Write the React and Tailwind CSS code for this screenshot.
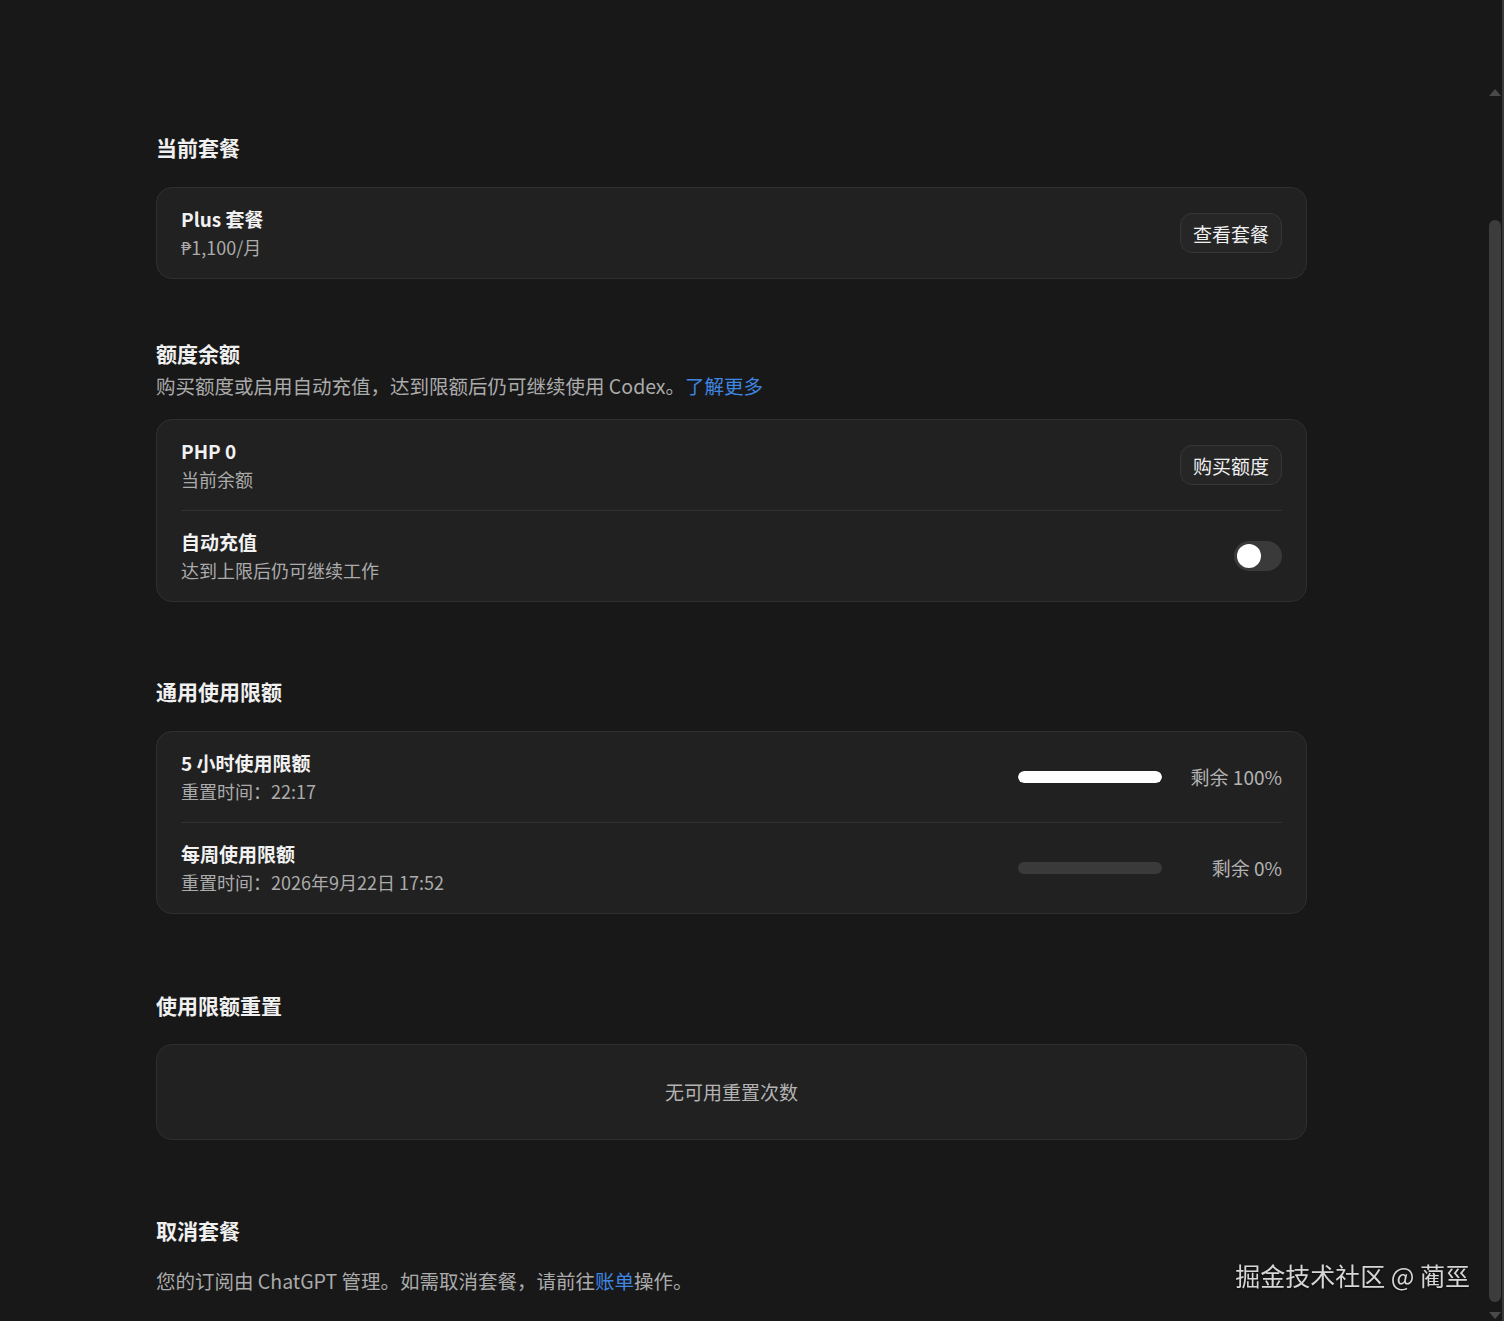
import React from 'react';

const font = { fontFamily: '"Noto Sans CJK SC", "Noto Sans", sans-serif' };

const SectionTitle = ({ children }) => (
  <h2 className="text-[21px] leading-[28px] font-bold text-[#f0f0f0]">{children}</h2>
);

const Button = ({ children }) => (
  <button className="h-10 px-3 rounded-xl border border-[#363636] bg-[#262626] text-[19px] text-[#f0f0f0] leading-none">
    {children}
  </button>
);

const Row = ({ title, sub, right, divider }) => (
  <div className={`flex items-center justify-between py-[17px] ${divider ? 'border-t border-[#313131]' : ''}`}>
    <div className="flex flex-col">
      <span className="text-[19px] leading-[28px] font-semibold text-[#f2f2f2]">{title}</span>
      <span className="text-[18px] leading-[28px] text-[#ababab]">{sub}</span>
    </div>
    {right}
  </div>
);

const Usage = ({ pct }) => (
  <div className="flex items-center gap-[28px]">
    <div className="w-[144px] h-[12px] rounded-full bg-[#3a3a3a] overflow-hidden">
      <div className="h-full rounded-full bg-white" style={{ width: `${pct}%` }} />
    </div>
    <span className="w-[92px] text-right text-[19px] text-[#b3b3b3]">剩余 {pct}%</span>
  </div>
);

const Toggle = () => (
  <div className="w-12 h-[30px] rounded-full bg-[#3a3a3a] flex items-center px-[3px]">
    <div className="w-6 h-6 rounded-full bg-white" />
  </div>
);

const Card = ({ children, className = '' }) => (
  <div className={`rounded-2xl border border-[#2f2f2f] bg-[#212121] px-6 ${className}`}>{children}</div>
);

export default function App() {
  return (
    <div className="relative h-[1321px] overflow-hidden flex bg-[#181818]" style={font}>
      <main className="flex-1 pl-[156px] pt-[133px]">
        <div className="w-[1151px]">
          <SectionTitle>当前套餐</SectionTitle>
          <Card className="mt-[26px]">
            <Row title="Plus 套餐" sub="₱1,100/月" right={<Button>查看套餐</Button>} />
          </Card>

          <div className="mt-[60px]">
            <SectionTitle>额度余额</SectionTitle>
            <p className="mt-[5px] text-[19.5px] leading-[28px] text-[#ababab]">
              购买额度或启用自动充值，达到限额后仍可继续使用 Codex。<span className="text-[#3f86e0]">了解更多</span>
            </p>
            <Card className="mt-[19px]">
              <Row title="PHP 0" sub="当前余额" right={<Button>购买额度</Button>} />
              <Row title="自动充值" sub="达到上限后仍可继续工作" right={<Toggle />} divider />
            </Card>
          </div>

          <div className="mt-[75px]">
            <SectionTitle>通用使用限额</SectionTitle>
            <Card className="mt-[26px]">
              <Row title="5 小时使用限额" sub="重置时间：22:17" right={<Usage pct={100} />} />
              <Row title="每周使用限额" sub="重置时间：2026年9月22日 17:52" right={<Usage pct={0} />} divider />
            </Card>
          </div>

          <div className="mt-[77px]">
            <SectionTitle>使用限额重置</SectionTitle>
            <Card className="mt-[25px] h-[96px] flex items-center justify-center">
              <span className="text-[19px] text-[#b3b3b3]">无可用重置次数</span>
            </Card>
          </div>

          <div className="mt-[76px]">
            <SectionTitle>取消套餐</SectionTitle>
            <p className="mt-[23px] text-[19.5px] leading-[28px] text-[#ababab]">
              您的订阅由 ChatGPT 管理。如需取消套餐，请前往<span className="text-[#3f86e0]">账单</span>操作。
            </p>
          </div>
        </div>
      </main>

      {/* fake scrollbar */}
      <div className="w-[17px] flex flex-col items-center border-r-2 border-[#3a3a3a] bg-[#181818]">
        <div className="mt-[89px] w-0 h-0 border-l-[6px] border-r-[6px] border-b-[7px] border-l-transparent border-r-transparent border-b-[#4a4a4a]" />
        <div className="mt-[124px] w-[12px] flex-1 rounded-full bg-[#3c3c3c]" />
        <div className="mt-[10px] mb-[2px] w-0 h-0 border-l-[6px] border-r-[6px] border-t-[7px] border-l-transparent border-r-transparent border-t-[#4a4a4a]" />
      </div>

      <div className="absolute right-[34px] bottom-[33px] text-[25px] leading-none text-[#d6d6d6] drop-shadow-[0_1px_1px_rgba(0,0,0,0.6)]">
        掘金技术社区 @ 蔺巠
      </div>
    </div>
  );
}
